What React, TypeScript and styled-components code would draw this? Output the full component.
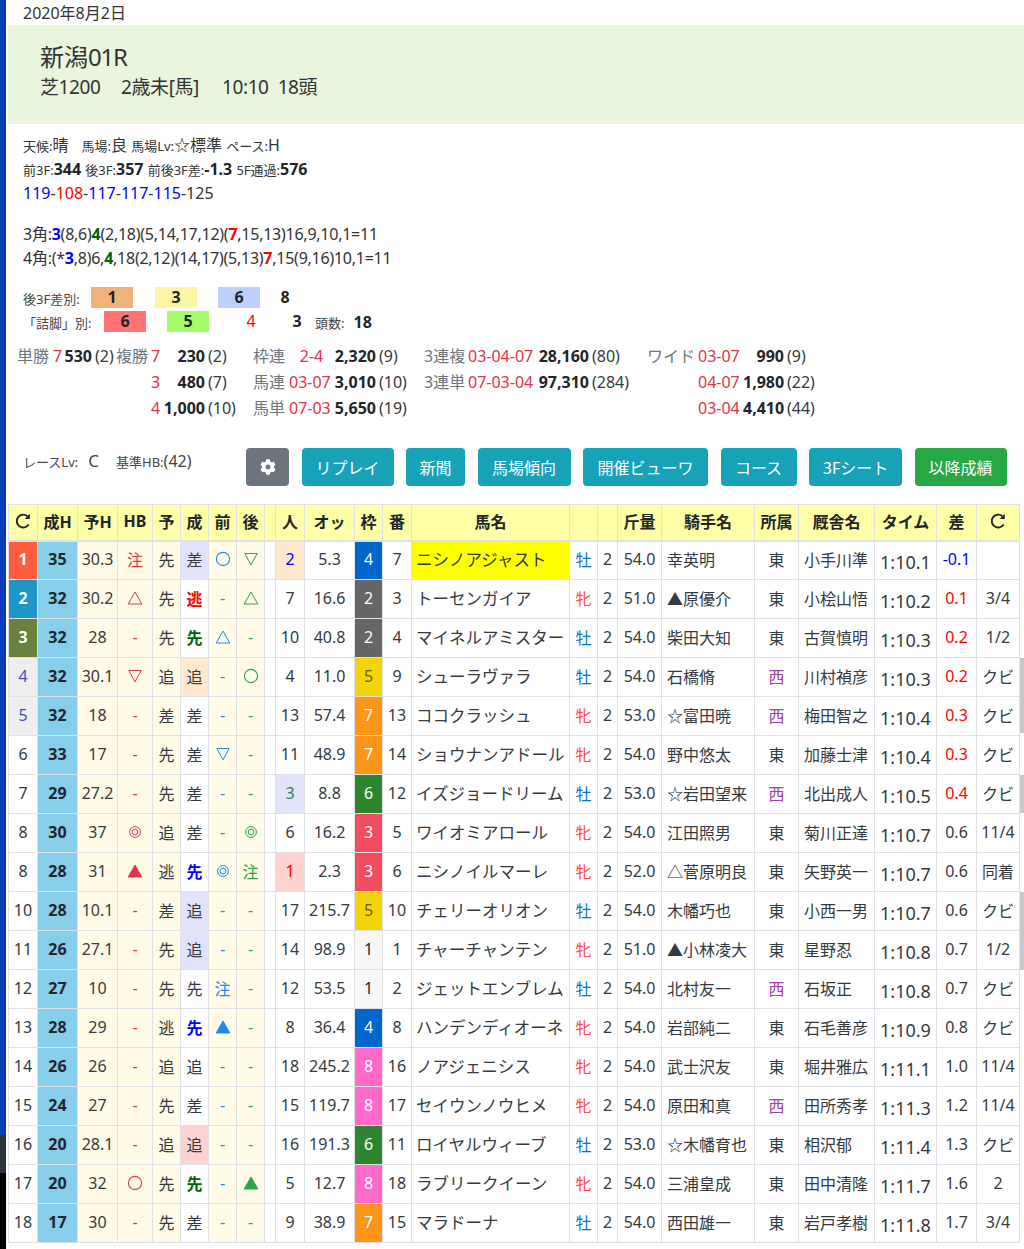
import React from "react";
import styled, { createGlobalStyle } from "styled-components";

const FONT = `"Noto Sans", "Noto Sans CJK JP", sans-serif`;

const GlobalStyle = createGlobalStyle`
	html, body {
		margin: 0;
		padding: 0;
		background: #fff;
		color: #212529;
		font-family: ${FONT};
		font-size: 16px;
		overflow: hidden;
	}
`;

type Mark = "" | "-" | "○" | "◎" | "▲" | "△" | "▽" | "注";

interface Row {
	rank: string;
	rankBg?: string;
	rankColor?: string;
	seiH: number;
	yoH: string;
	hb: Mark;
	yo: string;
	sei: string;
	seiStyle?: "red" | "green" | "blue" | "lav" | "peach" | "pink";
	front: Mark;
	back: Mark;
	pop: string;
	popBg?: string;
	popColor?: string;
	odds: string;
	waku: number;
	ban: number;
	name: string;
	nameHit?: boolean;
	sex: "牡" | "牝";
	kin: string;
	jockey: string;
	area: "東" | "西";
	trainer: string;
	time: string;
	diff: string;
	diffColor?: string;
	margin: string;
}

const rows: Row[] = [
	{ rank: "1", rankBg: "#ff5c3b", rankColor: "#fff", seiH: 35, yoH: "30.3", hb: "注", yo: "先", sei: "差", seiStyle: "lav", front: "○", back: "▽", pop: "2", popBg: "#ffe8cc", popColor: "#0000ff", odds: "5.3", waku: 4, ban: 7, name: "ニシノアジャスト", nameHit: true, sex: "牡", kin: "54.0", jockey: "幸英明", area: "東", trainer: "小手川準", time: "1:10.1", diff: "-0.1", diffColor: "#0000ff", margin: "" },
	{ rank: "2", rankBg: "#1e96c8", rankColor: "#fff", seiH: 32, yoH: "30.2", hb: "△", yo: "先", sei: "逃", seiStyle: "red", front: "-", back: "△", pop: "7", odds: "16.6", waku: 2, ban: 3, name: "トーセンガイア", sex: "牝", kin: "51.0", jockey: "▲原優介", area: "東", trainer: "小桧山悟", time: "1:10.2", diff: "0.1", diffColor: "#ff0000", margin: "3/4" },
	{ rank: "3", rankBg: "#68813c", rankColor: "#fff", seiH: 32, yoH: "28", hb: "-", yo: "先", sei: "先", seiStyle: "green", front: "△", back: "-", pop: "10", odds: "40.8", waku: 2, ban: 4, name: "マイネルアミスター", sex: "牡", kin: "54.0", jockey: "柴田大知", area: "東", trainer: "古賀慎明", time: "1:10.3", diff: "0.2", diffColor: "#ff0000", margin: "1/2" },
	{ rank: "4", rankBg: "#eeeeee", rankColor: "#3f51b5", seiH: 32, yoH: "30.1", hb: "▽", yo: "追", sei: "追", seiStyle: "peach", front: "-", back: "○", pop: "4", odds: "11.0", waku: 5, ban: 9, name: "シューラヴァラ", sex: "牡", kin: "54.0", jockey: "石橋脩", area: "西", trainer: "川村禎彦", time: "1:10.3", diff: "0.2", diffColor: "#ff0000", margin: "クビ" },
	{ rank: "5", rankBg: "#eeeeee", rankColor: "#3f51b5", seiH: 32, yoH: "18", hb: "-", yo: "差", sei: "差", front: "-", back: "-", pop: "13", odds: "57.4", waku: 7, ban: 13, name: "ココクラッシュ", sex: "牝", kin: "53.0", jockey: "☆富田暁", area: "西", trainer: "梅田智之", time: "1:10.4", diff: "0.3", diffColor: "#ff0000", margin: "クビ" },
	{ rank: "6", seiH: 33, yoH: "17", hb: "-", yo: "先", sei: "差", front: "▽", back: "-", pop: "11", odds: "48.9", waku: 7, ban: 14, name: "ショウナンアドール", sex: "牝", kin: "54.0", jockey: "野中悠太", area: "東", trainer: "加藤士津", time: "1:10.4", diff: "0.3", diffColor: "#ff0000", margin: "クビ" },
	{ rank: "7", seiH: 29, yoH: "27.2", hb: "-", yo: "先", sei: "差", front: "-", back: "-", pop: "3", popBg: "#e2e2fa", popColor: "#2e7d5b", odds: "8.8", waku: 6, ban: 12, name: "イズジョードリーム", sex: "牡", kin: "53.0", jockey: "☆岩田望来", area: "西", trainer: "北出成人", time: "1:10.5", diff: "0.4", diffColor: "#ff0000", margin: "クビ" },
	{ rank: "8", seiH: 30, yoH: "37", hb: "◎", yo: "追", sei: "差", front: "-", back: "◎", pop: "6", odds: "16.2", waku: 3, ban: 5, name: "ワイオミアロール", sex: "牝", kin: "54.0", jockey: "江田照男", area: "東", trainer: "菊川正達", time: "1:10.7", diff: "0.6", margin: "11/4" },
	{ rank: "8", seiH: 28, yoH: "31", hb: "▲", yo: "逃", sei: "先", seiStyle: "blue", front: "◎", back: "注", pop: "1", popBg: "#ffd2d2", popColor: "#ff0000", odds: "2.3", waku: 3, ban: 6, name: "ニシノイルマーレ", sex: "牝", kin: "52.0", jockey: "△菅原明良", area: "東", trainer: "矢野英一", time: "1:10.7", diff: "0.6", margin: "同着" },
	{ rank: "10", seiH: 28, yoH: "10.1", hb: "-", yo: "差", sei: "追", seiStyle: "lav", front: "-", back: "-", pop: "17", odds: "215.7", waku: 5, ban: 10, name: "チェリーオリオン", sex: "牡", kin: "54.0", jockey: "木幡巧也", area: "東", trainer: "小西一男", time: "1:10.7", diff: "0.6", margin: "クビ" },
	{ rank: "11", seiH: 26, yoH: "27.1", hb: "-", yo: "先", sei: "追", seiStyle: "lav", front: "-", back: "-", pop: "14", odds: "98.9", waku: 1, ban: 1, name: "チャーチャンテン", sex: "牝", kin: "51.0", jockey: "▲小林凌大", area: "東", trainer: "星野忍", time: "1:10.8", diff: "0.7", margin: "1/2" },
	{ rank: "12", seiH: 27, yoH: "10", hb: "-", yo: "先", sei: "先", front: "注", back: "-", pop: "12", odds: "53.5", waku: 1, ban: 2, name: "ジェットエンブレム", sex: "牡", kin: "54.0", jockey: "北村友一", area: "西", trainer: "石坂正", time: "1:10.8", diff: "0.7", margin: "クビ" },
	{ rank: "13", seiH: 28, yoH: "29", hb: "-", yo: "逃", sei: "先", seiStyle: "blue", front: "▲", back: "-", pop: "8", odds: "36.4", waku: 4, ban: 8, name: "ハンデンディオーネ", sex: "牝", kin: "54.0", jockey: "岩部純二", area: "東", trainer: "石毛善彦", time: "1:10.9", diff: "0.8", margin: "クビ" },
	{ rank: "14", seiH: 26, yoH: "26", hb: "-", yo: "追", sei: "追", front: "-", back: "-", pop: "18", odds: "245.2", waku: 8, ban: 16, name: "ノアジェニシス", sex: "牝", kin: "54.0", jockey: "武士沢友", area: "東", trainer: "堀井雅広", time: "1:11.1", diff: "1.0", margin: "11/4" },
	{ rank: "15", seiH: 24, yoH: "27", hb: "-", yo: "先", sei: "差", front: "-", back: "-", pop: "15", odds: "119.7", waku: 8, ban: 17, name: "セイウンノウヒメ", sex: "牝", kin: "54.0", jockey: "原田和真", area: "西", trainer: "田所秀孝", time: "1:11.3", diff: "1.2", margin: "11/4" },
	{ rank: "16", seiH: 20, yoH: "28.1", hb: "-", yo: "追", sei: "追", seiStyle: "pink", front: "-", back: "-", pop: "16", odds: "191.3", waku: 6, ban: 11, name: "ロイヤルウィーブ", sex: "牡", kin: "53.0", jockey: "☆木幡育也", area: "東", trainer: "相沢郁", time: "1:11.4", diff: "1.3", margin: "クビ" },
	{ rank: "17", seiH: 20, yoH: "32", hb: "○", yo: "先", sei: "先", seiStyle: "green", front: "-", back: "▲", pop: "5", odds: "12.7", waku: 8, ban: 18, name: "ラブリークイーン", sex: "牝", kin: "54.0", jockey: "三浦皇成", area: "東", trainer: "田中清隆", time: "1:11.7", diff: "1.6", margin: "2" },
	{ rank: "18", seiH: 17, yoH: "30", hb: "-", yo: "先", sei: "差", front: "-", back: "-", pop: "9", odds: "38.9", waku: 7, ban: 15, name: "マラドーナ", sex: "牡", kin: "54.0", jockey: "西田雄一", area: "東", trainer: "岩戸孝樹", time: "1:11.8", diff: "1.7", margin: "3/4" },
];

const wakuColors: Record<number, { bg: string; fg: string }> = {
	1: { bg: "#f7f7f7", fg: "#212529" },
	2: { bg: "#666666", fg: "#fff" },
	3: { bg: "#f04e5e", fg: "#fff" },
	4: { bg: "#0066cc", fg: "#fff" },
	5: { bg: "#f2d408", fg: "#6b5d10" },
	6: { bg: "#2c842c", fg: "#fff" },
	7: { bg: "#fb9618", fg: "#fff" },
	8: { bg: "#ff69c8", fg: "#fff" },
};

const colWidths = [29, 40, 40, 35, 28, 28, 28, 28, 11, 29, 50, 28, 29, 158, 28, 20, 44, 93, 44, 76, 62, 40, 43];

// scrollbar ticks sitting on the right page edge
const ticks = [
	{ top: 658, height: 75 },
	{ top: 775, height: 38 },
	{ top: 892, height: 78 },
];

const MarkIcon = ({ mark }: { mark: Mark }) => {
	if (mark === "○") {
		return (
			<svg width="16" height="16" viewBox="0 0 16 16">
				<circle cx="8" cy="8" r="6.6" fill="none" stroke="currentColor" strokeWidth="1.1" />
			</svg>
		);
	}
	if (mark === "◎") {
		return (
			<svg width="16" height="16" viewBox="0 0 16 16">
				<circle cx="8" cy="8" r="5.4" fill="none" stroke="currentColor" strokeWidth="1" />
				<circle cx="8" cy="8" r="3" fill="none" stroke="currentColor" strokeWidth="1" />
			</svg>
		);
	}
	if (mark === "▲" || mark === "△") {
		return (
			<svg width="16" height="16" viewBox="0 0 16 16">
				<path d="M8 2 L14.8 14 H1.2 Z" fill={mark === "▲" ? "currentColor" : "none"} stroke="currentColor" strokeWidth="1" />
			</svg>
		);
	}
	if (mark === "▽") {
		return (
			<svg width="16" height="16" viewBox="0 0 16 16">
				<path d="M1.8 2.5 H14.2 L8 13.8 Z" fill="none" stroke="currentColor" strokeWidth="1" />
			</svg>
		);
	}
	return <>{mark}</>;
};

const RefreshIcon = ({ size }: { size: number }) => (
	<svg width={size} height={size} viewBox="0 0 18 18">
		<path d="M14.6 12.4 A6.4 6.4 0 1 1 13.4 4.3" fill="none" stroke="#212529" strokeWidth="1.9" />
		<path d="M15.8 1.8 V6.9 H10.7 Z" fill="#212529" />
	</svg>
);

const GearIcon = () => (
	<svg width="16" height="16" viewBox="0 0 512 512">
		<path
			fill="#fff"
			d="M487.4 315.7l-42.6-24.6c4.3-23.2 4.3-47 0-70.2l42.6-24.6c4.9-2.8 7.1-8.6 5.5-14-11.1-35.6-30-67.8-54.7-94.6-3.8-4.1-10-5.1-14.8-2.3L380.8 110c-17.9-15.4-38.5-27.3-60.8-35.1V25.8c0-5.6-3.9-10.5-9.4-11.7-36.7-8.2-74.3-7.8-109.2 0-5.5 1.2-9.4 6.1-9.4 11.7V75c-22.2 7.9-42.8 19.8-60.8 35.1L88.7 85.5c-4.9-2.8-11-1.9-14.8 2.3-24.7 26.7-43.6 58.9-54.7 94.6-1.7 5.4.6 11.2 5.5 14L67.3 221c-4.3 23.2-4.3 47 0 70.2l-42.6 24.6c-4.9 2.8-7.1 8.6-5.5 14 11.1 35.6 30 67.8 54.7 94.6 3.8 4.1 10 5.1 14.8 2.3l42.6-24.6c17.9 15.4 38.5 27.3 60.8 35.1v49.2c0 5.6 3.9 10.5 9.4 11.7 36.7 8.2 74.3 7.8 109.2 0 5.5-1.2 9.4-6.1 9.4-11.7v-49.2c22.2-7.9 42.8-19.8 60.8-35.1l42.6 24.6c4.9 2.8 11 1.9 14.8-2.3 24.7-26.7 43.6-58.9 54.7-94.6 1.5-5.5-.7-11.3-5.6-14.1zM256 336c-44.1 0-80-35.9-80-80s35.9-80 80-80 80 35.9 80 80-35.9 80-80 80z"
		/>
	</svg>
);

const App = () => {
	return (
		<>
			<GlobalStyle />
			<SideRail />
			{ticks.map((t) => (
				<ScrollTick key={t.top} style={{ top: t.top, height: t.height }} />
			))}
			<Page>
				<DateLine>2020年8月2日</DateLine>
				<Jumbo>
					<RaceTitle>
						新潟<TitleNum>01R</TitleNum>
					</RaceTitle>
					<RaceSub>
						<SubPart $w={81}>芝1200</SubPart>
						<SubPart $w={101}>2歳未[馬]</SubPart>
						<SubPart>10:10&nbsp;&nbsp;18頭</SubPart>
					</RaceSub>
				</Jumbo>
				<InfoBlock>
					<InfoLine>
						<Tiny>天候:</Tiny>晴<Gap />
						<Tiny>馬場:</Tiny>良 <Tiny>馬場Lv:</Tiny>☆標準 <Tiny>ペース:</Tiny>H
					</InfoLine>
					<InfoLine>
						<Tiny>前3F:</Tiny>
						<b>344</b> <Tiny>後3F:</Tiny>
						<b>357</b> <Tiny>前後3F差:</Tiny>
						<b>-1.3</b> <Tiny>5F通過:</Tiny>
						<b>576</b>
					</InfoLine>
					<InfoLine>
						<Lap $c="#0000ff">119</Lap>-<Lap $c="#ff0000">108</Lap>-<Lap $c="#0000ff">117</Lap>-
						<Lap $c="#0000ff">117</Lap>-<Lap $c="#0000ff">115</Lap>-125
					</InfoLine>
				</InfoBlock>
				<CornerBlock>
					<CornerLine>
						3角:<Hi $c="#0000ff">3</Hi>(8,6)<Hi $c="#006400">4</Hi>(2,18)(5,14,17,12)(<Hi $c="#ff0000">7</Hi>,15,13)16,9,10,1=11
					</CornerLine>
					<CornerLine>
						4角:(*<Hi $c="#0000ff">3</Hi>,8)6,<Hi $c="#006400">4</Hi>,18(2,12)(14,17)(5,13)<Hi $c="#ff0000">7</Hi>,15(9,16)10,1=11
					</CornerLine>
				</CornerBlock>
				<BetaBlock>
					<BetaRow>
						<BetaLabel $w={68}>後3F差別:</BetaLabel>
						<Chip $bg="#f0b27a">1</Chip>
						<ChipGap $w={22} />
						<Chip $bg="#fcf6a4">3</Chip>
						<ChipGap $w={21} />
						<Chip $bg="#bcd0fb">6</Chip>
						<ChipGap $w={4} />
						<Chip>8</Chip>
					</BetaRow>
					<BetaRow>
						<BetaLabel $w={81}>「詰脚」別:</BetaLabel>
						<Chip $bg="#ff7373">6</Chip>
						<ChipGap $w={21} />
						<Chip $bg="#a5fb6a">5</Chip>
						<ChipGap $w={21} />
						<Chip $c="#ff0000" $light>4</Chip>
						<ChipGap $w={4} />
						<Chip>3</Chip>
						<HeadCount>
							<Tiny>頭数:</Tiny>
							<b>18</b>
						</HeadCount>
					</BetaRow>
				</BetaBlock>
				<PayGrid>
					<PayRow>
						<Cap $w={36}>単勝</Cap>
						<Num $w={11}>7</Num>
						<Money $w={28}>530</Money>
						<Pop $w={24}>(2)</Pop>
						<Cap $w={35}>複勝</Cap>
						<Num $w={12}>7</Num>
						<Money $w={42}>230</Money>
						<Pop $w={48}>(2)</Pop>
						<Cap $w={36}>枠連</Cap>
						<Num $w={45} $center>2-4</Num>
						<Money $w={42}>2,320</Money>
						<Pop $w={48}>(9)</Pop>
						<Cap $w={44}>3連複</Cap>
						<Num $w={69}>03-04-07</Num>
						<Money $w={52}>28,160</Money>
						<Pop $w={58}>(80)</Pop>
						<Cap $w={51}>ワイド</Cap>
						<Num $w={45}>03-07</Num>
						<Money $w={41}>990</Money>
						<Pop $w={40}>(9)</Pop>
					</PayRow>
					<PayRow>
						<PaySpace $w={134} />
						<Num $w={12}>3</Num>
						<Money $w={42}>480</Money>
						<Pop $w={48}>(7)</Pop>
						<Cap $w={36}>馬連</Cap>
						<Num $w={45}>03-07</Num>
						<Money $w={42}>3,010</Money>
						<Pop $w={48}>(10)</Pop>
						<Cap $w={44}>3連単</Cap>
						<Num $w={69}>07-03-04</Num>
						<Money $w={52}>97,310</Money>
						<Pop $w={58}>(284)</Pop>
						<PaySpace $w={51} />
						<Num $w={45}>04-07</Num>
						<Money $w={41}>1,980</Money>
						<Pop $w={40}>(22)</Pop>
					</PayRow>
					<PayRow>
						<PaySpace $w={134} />
						<Num $w={12}>4</Num>
						<Money $w={42}>1,000</Money>
						<Pop $w={48}>(10)</Pop>
						<Cap $w={36}>馬単</Cap>
						<Num $w={45}>07-03</Num>
						<Money $w={42}>5,650</Money>
						<Pop $w={48}>(19)</Pop>
						<PaySpace $w={223} />
						<PaySpace $w={51} />
						<Num $w={45}>03-04</Num>
						<Money $w={41}>4,410</Money>
						<Pop $w={40}>(44)</Pop>
					</PayRow>
				</PayGrid>
				<ActionBar>
					<LevelBox>
						<Tiny>レースLv:</Tiny>
						<LevelValue>C</LevelValue>
						<Tiny>基準HB:</Tiny>(42)
					</LevelBox>
					<Buttons>
						<Button $kind="gear" $w={43}>
							<GearIcon />
						</Button>
						<Button $w={92}>リプレイ</Button>
						<Button $w={59}>新聞</Button>
						<Button $w={93}>馬場傾向</Button>
						<Button $w={125}>開催ビューワ</Button>
						<Button $w={76}>コース</Button>
						<Button $w={93}>3Fシート</Button>
						<Button $kind="green" $w={92}>以降成績</Button>
					</Buttons>
				</ActionBar>
				<ResultTable>
					<colgroup>
						{colWidths.map((w, i) => (
							<col key={i} style={{ width: w }} />
						))}
					</colgroup>
					<thead>
						<tr>
							<Th><RefreshIcon size={18} /></Th>
							<Th>成H</Th>
							<Th>予H</Th>
							<Th>HB</Th>
							<Th>予</Th>
							<Th>成</Th>
							<Th>前</Th>
							<Th>後</Th>
							<Th />
							<Th>人</Th>
							<Th>オッ</Th>
							<Th>枠</Th>
							<Th>番</Th>
							<Th>馬名</Th>
							<Th />
							<Th />
							<Th>斤量</Th>
							<Th>騎手名</Th>
							<Th>所属</Th>
							<Th>厩舎名</Th>
							<Th>タイム</Th>
							<Th>差</Th>
							<Th><RefreshIcon size={18} /></Th>
						</tr>
					</thead>
					<tbody>
						{rows.map((r, i) => (
							<tr key={i}>
								<RankCell $bg={r.rankBg} $c={r.rankColor} $strong={r.rankColor === "#fff"}>{r.rank}</RankCell>
								<SeiHCell>{r.seiH}</SeiHCell>
								<CreamCell>{r.yoH}</CreamCell>
								<CreamCell $c="#e0364c"><MarkIcon mark={r.hb} /></CreamCell>
								<CreamCell>{r.yo}</CreamCell>
								<LegCell $v={r.seiStyle}>{r.sei}</LegCell>
								<CreamCell $c="#1e88f5"><MarkIcon mark={r.front} /></CreamCell>
								<CreamCell $c="#28a745"><MarkIcon mark={r.back} /></CreamCell>
								<Td />
								<Td style={r.popBg ? { background: r.popBg, color: r.popColor } : undefined}>{r.pop}</Td>
								<Td>{r.odds}</Td>
								<WakuCell $bg={wakuColors[r.waku].bg} $c={wakuColors[r.waku].fg}>{r.waku}</WakuCell>
								<Td>{r.ban}</Td>
								<NameCell $hit={r.nameHit}>{r.name}</NameCell>
								<SexCell $f={r.sex === "牝"}>{r.sex}</SexCell>
								<Td>2</Td>
								<Td>{r.kin}</Td>
								<LeftCell>{r.jockey}</LeftCell>
								<AreaCell $west={r.area === "西"}>{r.area}</AreaCell>
								<LeftCell>{r.trainer}</LeftCell>
								<TimeCell>{r.time}</TimeCell>
								<Td style={r.diffColor ? { color: r.diffColor } : undefined}>{r.diff}</Td>
								<Td>{r.margin}</Td>
							</tr>
						))}
					</tbody>
				</ResultTable>
			</Page>
		</>
	);
};

const SideRail = styled.div`
	position: fixed;
	left: 0;
	top: 0;
	bottom: 0;
	width: 6px;
	background: linear-gradient(
		to bottom,
		#0a3dbb 0,
		#0a3dbb 1135px,
		#2c3340 1135px,
		#2c3340 1173px,
		#000 1173px
	);
`;
const ScrollTick = styled.div`
	position: fixed;
	right: 0;
	width: 4px;
	background: #c8c8c8;
`;
const Page = styled.div`
	margin-left: 8px;
	width: 1016px;
	overflow: hidden;
	height: 1249px;
`;
const DateLine = styled.div`
	height: 25px;
	line-height: 26px;
	padding-left: 15px;
	font-size: 16px;
	color: #333;
`;
const Jumbo = styled.div`
	height: 99px;
	box-sizing: border-box;
	background: #e9f5dd;
	padding: 16px 32px 0;
	color: #333;
`;
const RaceTitle = styled.div`
	font-size: 24px;
	line-height: 32px;
`;
const TitleNum = styled.span`
	letter-spacing: -1.2px;
`;
const RaceSub = styled.div`
	font-size: 19px;
	line-height: 26px;
	margin-top: 1px;
	display: flex;
	letter-spacing: -0.4px;
`;
const SubPart = styled.span<{ $w?: number }>`
	${(p) => (p.$w ? `width: ${p.$w}px;` : "")}
	flex: none;
`;
const InfoBlock = styled.div`
	padding: 9px 0 0 15px;
	color: #333;
`;
const InfoLine = styled.div`
	height: 24px;
	line-height: 24px;
	font-size: 16px;
	white-space: nowrap;
	b {
		font-weight: 700;
		color: #212529;
	}
`;
const CornerLine = styled(InfoLine)`
	letter-spacing: -0.25px;
`;
const Tiny = styled.span`
	font-size: 13px;
	letter-spacing: 0;
`;
const Gap = styled.span`
	display: inline-block;
	width: 13px;
`;
const Lap = styled.span<{ $c: string }>`
	color: ${(p) => p.$c};
`;
const Hi = styled.b<{ $c: string }>`
	&& {
		color: ${(p) => p.$c};
	}
`;
const CornerBlock = styled.div`
	padding: 17px 0 0 15px;
	color: #333;
`;
const BetaBlock = styled.div`
	padding: 17px 0 0 15px;
	display: flex;
	flex-direction: column;
	gap: 3px;
`;
const BetaRow = styled.div`
	display: flex;
	align-items: center;
	height: 21px;
	white-space: nowrap;
`;
const BetaLabel = styled.span<{ $w: number }>`
	flex: none;
	width: ${(p) => p.$w}px;
	font-size: 13px;
	color: #444;
	padding-top: 2px;
`;
const Chip = styled.span<{ $bg?: string; $c?: string; $light?: boolean }>`
	flex: none;
	width: 42px;
	height: 21px;
	line-height: 21px;
	text-align: center;
	font-weight: ${(p) => (p.$light ? 400 : 700)};
	background: ${(p) => p.$bg || "transparent"};
	color: ${(p) => p.$c || "#212529"};
`;
const ChipGap = styled.span<{ $w: number }>`
	flex: none;
	width: ${(p) => p.$w}px;
`;
const HeadCount = styled.span`
	margin-left: -3px;
	display: flex;
	gap: 9px;
	align-items: baseline;
	color: #444;
	b {
		color: #212529;
	}
`;
const PayGrid = styled.div`
	padding: 11px 0 0 9px;
`;
const PayRow = styled.div`
	display: flex;
	height: 26px;
	line-height: 26px;
	white-space: nowrap;
`;
const PaySpace = styled.span<{ $w: number }>`
	flex: none;
	width: ${(p) => p.$w}px;
`;
const Cap = styled.span<{ $w: number }>`
	flex: none;
	width: ${(p) => p.$w}px;
	color: #6c757d;
`;
const Num = styled.span<{ $w: number; $center?: boolean }>`
	flex: none;
	width: ${(p) => p.$w}px;
	color: #dc3545;
	text-align: ${(p) => (p.$center ? "center" : "left")};
`;
const Money = styled.span<{ $w: number }>`
	flex: none;
	width: ${(p) => p.$w}px;
	font-weight: 700;
	text-align: right;
	color: #212529;
`;
const Pop = styled.span<{ $w: number }>`
	flex: none;
	width: ${(p) => p.$w}px;
	padding-left: 3px;
	box-sizing: border-box;
	color: #343a40;
`;
const ActionBar = styled.div`
	display: flex;
	align-items: flex-start;
	padding: 27px 0 0 15px;
	height: 83px;
	box-sizing: border-box;
`;
const LevelBox = styled.div`
	width: 223px;
	flex: none;
	line-height: 26px;
	color: #444;
	white-space: nowrap;
`;
const LevelValue = styled.span`
	display: inline-block;
	font-size: 17px;
	margin: 0 17px 0 10px;
`;
const Buttons = styled.div`
	display: flex;
	gap: 12.5px;
`;
const Button = styled.div<{ $kind?: "gear" | "green"; $w: number }>`
	box-sizing: border-box;
	width: ${(p) => p.$w}px;
	height: 38px;
	border-radius: 4px;
	color: #fff;
	font-size: 16px;
	display: flex;
	align-items: center;
	justify-content: center;
	white-space: nowrap;
	background: ${(p) =>
		p.$kind === "gear" ? "#6c757d" : p.$kind === "green" ? "#28a745" : "#17a2b8"};
`;
const ResultTable = styled.table`
	border-collapse: collapse;
	table-layout: fixed;
	width: 1011px;
	margin-top: 0;
	border-top: 1px solid #dee2e6;
`;
const Th = styled.th`
	box-sizing: border-box;
	background: #ffffa8;
	border: 1px solid #dee2e6;
	border-bottom-width: 2px;
	height: 36px;
	padding: 0 0 2px;
	font-size: 16px;
	font-weight: 700;
	text-align: center;
	white-space: nowrap;
	color: #212529;
	overflow: hidden;
	svg {
		display: block;
		margin: 0 auto;
	}
`;
const Td = styled.td`
	box-sizing: border-box;
	border: 1px solid #dee2e6;
	height: 39px;
	padding: 0 0 3px;
	font-size: 16px;
	text-align: center;
	vertical-align: middle;
	white-space: nowrap;
	overflow: hidden;
	color: #343a40;
	svg {
		display: block;
		margin: 0 auto;
	}
`;
const RankCell = styled(Td)<{ $bg?: string; $c?: string; $strong?: boolean }>`
	background: ${(p) => p.$bg || "#fff"};
	color: ${(p) => p.$c || "#343a40"};
	font-weight: ${(p) => (p.$strong ? 700 : 400)};
`;
const SeiHCell = styled(Td)`
	background: #87ceeb;
	color: #212529;
	font-weight: 700;
`;
const CreamCell = styled(Td)<{ $c?: string }>`
	background: #fffbe6;
	color: ${(p) => p.$c || "#343a40"};
`;
const legStyles = {
	red: "color:#ff0000;font-weight:700;",
	green: "color:#006400;font-weight:700;",
	blue: "color:#0000ff;font-weight:700;",
	lav: "background:#e2e2fa;",
	peach: "background:#ffe8cc;",
	pink: "background:#ffd2d2;",
};
const LegCell = styled(Td)<{ $v?: keyof typeof legStyles }>`
	${(p) => (p.$v ? legStyles[p.$v] : "")}
`;
const WakuCell = styled(Td)<{ $bg: string; $c: string }>`
	background: ${(p) => p.$bg};
	color: ${(p) => p.$c};
`;
const NameCell = styled(Td)<{ $hit?: boolean }>`
	text-align: left;
	padding-left: 4px;
	font-size: 16.5px;
	background: ${(p) => (p.$hit ? "#ffff00" : "#fff")};
`;
const SexCell = styled(Td)<{ $f: boolean }>`
	color: ${(p) => (p.$f ? "#ff4b4b" : "#0a73c4")};
`;
const LeftCell = styled(Td)`
	text-align: left;
	padding-left: 5px;
`;
const AreaCell = styled(Td)<{ $west: boolean }>`
	color: ${(p) => (p.$west ? "#a040a8" : "#343a40")};
`;
const TimeCell = styled(Td)`
	font-size: 18px;
	padding: 3px 0 0;
`;

export default App;
